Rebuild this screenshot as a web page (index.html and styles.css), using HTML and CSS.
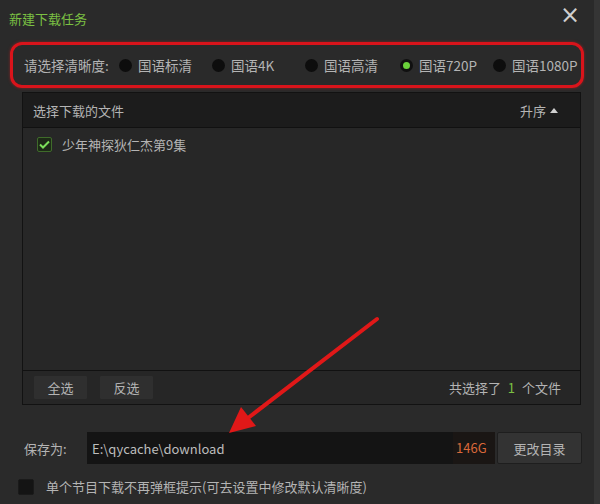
FILE: index.html
```html
<!DOCTYPE html>
<html>
  <head>
    <meta charset="utf-8" />
    <title>新建下载任务</title>
    <link rel="stylesheet" href="styles.css">
  </head>
  <body>
    <div class="window">
      <div class="titlebar">
        <span class="title">新建下载任务</span>
        <span class="close">&times;</span>
      </div>

      <div class="quality">
        <span class="quality-label">请选择清晰度:</span>
        <label class="radio"><span class="dot"></span>国语标清</label>
        <label class="radio"><span class="dot"></span>国语4K</label>
        <label class="radio wide"><span class="dot"></span>国语高清</label>
        <label class="radio"><span class="dot on"></span>国语720P</label>
        <label class="radio last"><span class="dot"></span>国语1080P</label>
      </div>

      <div class="panel">
        <div class="panel-head">
          <span>选择下载的文件</span>
          <span class="sort">升序 <span class="caret"></span></span>
        </div>
        <div class="panel-list">
          <div class="file">
            <span class="check on">
              <svg width="11" height="9" viewBox="0 0 11 9"><path d="M1 4.5 L4 7.5 L10 1.5" fill="none" stroke="#7ce05a" stroke-width="2"/></svg>
            </span>
            少年神探狄仁杰第9集
          </div>
        </div>
        <div class="panel-foot">
          <div class="btns">
            <button type="button" class="btn">全选</button>
            <button type="button" class="btn">反选</button>
          </div>
          <span class="count">共选择了 <em>1</em> 个文件</span>
        </div>
      </div>

      <div class="save">
        <span class="save-label">保存为:</span>
        <div class="path">
          <span class="path-text">E:\qycache\download</span>
          <span class="space">146G</span>
        </div>
        <button type="button" class="btn change">更改目录</button>
      </div>

      <div class="remember">
        <span class="check"></span>
        单个节目下载不再弹框提示(可去设置中修改默认清晰度)
      </div>

      <!-- annotation arrow drawn over the dialog -->
      <svg class="arrow" width="600" height="504" viewBox="0 0 600 504">
        <line x1="377" y1="319" x2="248" y2="418" stroke="#e01818" stroke-width="4" stroke-linecap="round"/>
        <polygon points="229,433 241,407 256,426" fill="#e01818"/>
      </svg>
    </div>
  </body>
</html>
```

FILE: styles.css
```css
body {
  margin: 0;
  background: #2b2b2b;
  font-family: "Noto Sans CJK SC", "Liberation Sans", sans-serif;
  font-size: 13px;
  color: #b4b4b4;
}

.window {
  position: relative;
  width: 594px;
  height: 504px;
  background: #2a2a2a;
  border-right: 6px solid #353535;
  overflow: hidden;
}

.titlebar {
  display: flex;
  justify-content: space-between;
  align-items: center;
  height: 36px;
  padding: 0 14px 0 9px;
}

.title {
  color: #7bc043;
  font-size: 13px;
}

.close {
  color: #cfcfcf;
  font-family: "DejaVu Sans", sans-serif;
  font-size: 24px;
  line-height: 1;
  margin-top: -6px;
}

.quality {
  display: flex;
  align-items: center;
  height: 40px;
  margin: 6px 10px 0 10px;
  padding-left: 11px;
  border: 3px solid #d9141b;
  border-radius: 12px;
  box-shadow: 0 0 3px rgba(230, 30, 30, 0.5);
  font-size: 13.5px;
}

.quality-label {
  width: 95px;
}

.radio {
  display: flex;
  align-items: center;
  width: 93px;
}

.radio.wide {
  width: 95px;
}

.radio.last {
  width: auto;
}

.dot {
  width: 13px;
  height: 13px;
  border-radius: 50%;
  background: #0d0d0d;
  margin-right: 6px;
  box-sizing: border-box;
}

.dot.on {
  background: #6ad13a;
  border: 3px solid #101010;
}

.panel {
  display: flex;
  flex-direction: column;
  height: 311px;
  margin: 4px 13px 0 22px;
  border: 1px solid #121212;
}

.panel-head {
  display: flex;
  justify-content: space-between;
  align-items: center;
  height: 34px;
  padding: 0 22px 0 10px;
  background: #1c1c1c;
  border-bottom: 1px solid #111;
}

.sort {
  display: flex;
  align-items: center;
  gap: 4px;
}

.caret {
  width: 0;
  height: 0;
  border-left: 4px solid transparent;
  border-right: 4px solid transparent;
  border-bottom: 5px solid #d0d0d0;
}

.panel-list {
  flex: 1;
  background: #272727;
  padding-top: 7px;
}

.file {
  display: flex;
  align-items: center;
  padding-left: 14px;
}

.check {
  display: flex;
  align-items: center;
  justify-content: center;
  width: 15px;
  height: 15px;
  margin-right: 10px;
  background: #141414;
  border: 1px solid #1a1a1a;
  border-radius: 2px;
  box-sizing: border-box;
}

.check.on {
  border-color: #3f6b2a;
  background: #1d2a17;
}

.panel-foot {
  display: flex;
  justify-content: space-between;
  align-items: center;
  height: 33px;
  padding: 0 19px 0 10px;
  background: #262626;
  border-top: 1px solid #111;
}

.btns {
  display: flex;
  gap: 11px;
}

.btn {
  font-family: inherit;
  font-size: 13px;
  color: #b4b4b4;
  background: #2f2f2f;
  border: 1px solid #262626;
  border-radius: 2px;
  width: 55px;
  height: 25px;
  padding: 0;
}

.count em {
  font-style: normal;
  color: #7bc043;
  margin: 0 4px;
}

.save {
  display: flex;
  align-items: center;
  height: 32px;
  margin: 27px 12px 0 24px;
}

.save-label {
  width: 63px;
}

.path {
  flex: 1;
  display: flex;
  align-items: center;
  height: 32px;
  background: #141414;
}

.path-text {
  flex: 1;
  padding-left: 5px;
  color: #bdbdbd;
}

.space {
  width: 42px;
  height: 32px;
  line-height: 32px;
  padding-left: 3px;
  box-sizing: border-box;
  background: #1a1614;
  color: #d9683a;
}

.btn.change {
  width: 85px;
  height: 32px;
  margin-left: 2px;
  background: #333;
  border: 1px solid #1e1e1e;
}

.remember {
  display: flex;
  align-items: center;
  margin: 13px 0 0 18px;
}

.remember .check {
  width: 16px;
  height: 16px;
  margin-right: 12px;
}

.arrow {
  position: absolute;
  left: 0;
  top: 0;
  pointer-events: none;
}
```
